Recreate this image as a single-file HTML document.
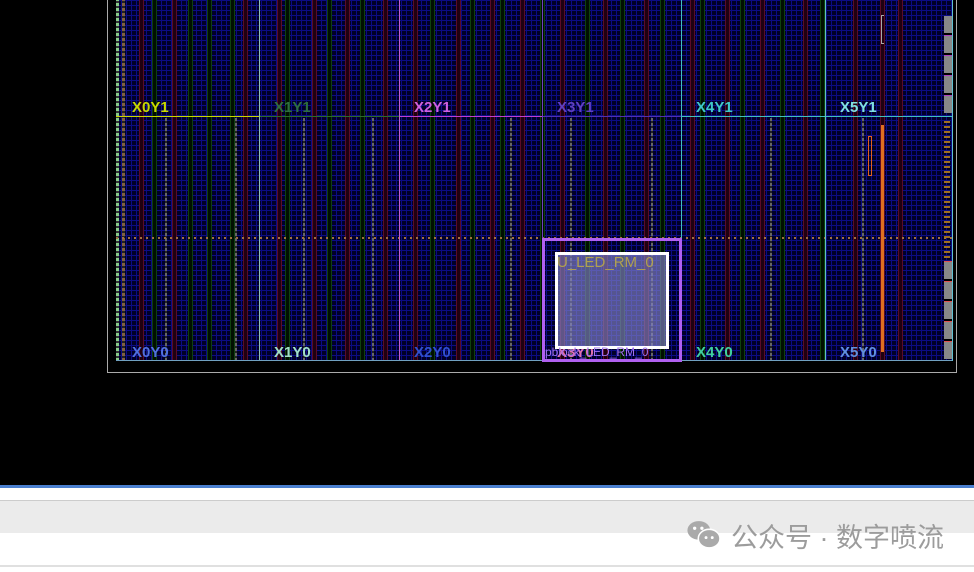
<!DOCTYPE html>
<html><head><meta charset="utf-8"><style>
body{margin:0;width:974px;height:572px;overflow:hidden;background:#000;position:relative;font-family:"Liberation Sans","Noto Sans CJK SC",sans-serif}
.a{position:absolute}
#grid{left:116px;top:0;width:836px;height:361px;background-color:#000028;
background-image:repeating-linear-gradient(90deg,#0c0c84 0 1px,transparent 1px 5px),repeating-linear-gradient(0deg,#0c0c84 0 1px,transparent 1px 5px)}
.r{position:absolute;top:0;height:361px;width:3px;border-left:1px solid #5a0c28;border-right:1px solid #5a0c28;background:#200010}
.g{position:absolute;top:0;height:361px;width:3px;border-left:1px solid #0f400f;border-right:1px solid #0f400f;background:#001000}
.y{position:absolute;top:118px;height:243px;width:2px;background:repeating-linear-gradient(0deg,#666 0 3px,#222 3px 5px)}
.l{position:absolute;font-size:15px;font-weight:bold}
</style></head><body>
<div class="a" style="left:107px;top:0;width:850px;height:373px;border-right:1px solid #aaa;border-bottom:1px solid #aaa;border-left:1px solid #aaa;box-sizing:border-box"></div>
<div class="a" id="grid"></div>
<div id="s"></div>
<script>
var s='';
[139,172,243,277,312,345,383,413,456,490,520,560,603,644,690,725,760,803,853,880,898].forEach(function(x){s+='<div class="r" style="left:'+x+'px"></div>'});
[152,188,207,230,285,327,360,430,470,500,540,585,620,660,700,740,780,820].forEach(function(x){s+='<div class="g" style="left:'+x+'px"></div>'});
[165,235,303,372,510,570,651,770,862].forEach(function(x){s+='<div class="y" style="left:'+x+'px"></div>'});
document.getElementById('s').innerHTML=s;
</script>
<div class="a" style="left:116px;top:0;width:3px;height:361px;background:repeating-linear-gradient(0deg,#8c8 0 3px,#333 3px 5px)"></div>
<div class="a" style="left:122px;top:0;width:3px;height:361px;background:repeating-linear-gradient(0deg,#806040 0 3px,#222 3px 5px)"></div>
<div class="a" style="left:116px;top:237px;width:836px;height:2px;background:repeating-linear-gradient(90deg,#a07040 0 2px,transparent 2px 6px)"></div>
<div class="a" style="left:116px;top:116px;width:143px;height:1px;background:#c8d800"></div>
<div class="a" style="left:259px;top:116px;width:140px;height:1px;background:#2a6a2a"></div>
<div class="a" style="left:399px;top:116px;width:143px;height:1px;background:#c040d0"></div>
<div class="a" style="left:542px;top:116px;width:139px;height:1px;background:#5030b0"></div>
<div class="a" style="left:681px;top:116px;width:271px;height:1px;background:#40c0c0"></div>
<div class="a" style="left:259px;top:0;width:1px;height:361px;background:#90c0b0"></div>
<div class="a" style="left:399px;top:0;width:1px;height:361px;background:#c060d0"></div>
<div class="a" style="left:542px;top:0;width:1px;height:361px;background:#7040c0"></div>
<div class="a" style="left:681px;top:0;width:1px;height:361px;background:#40c0c0"></div>
<div class="a" style="left:825px;top:0;width:1px;height:361px;background:#60c0c0"></div>
<div class="a" style="left:116px;top:360px;width:836px;height:1px;background:#70a0c0"></div>
<div class="a" style="left:952px;top:0;width:1px;height:361px;background:#60c0d0"></div>
<div class="a" style="left:944px;top:16px;width:8px;height:97px;background:repeating-linear-gradient(0deg,#888 0 17px,#b040c0 17px 18px,#000 18px 20px)"></div>
<div class="a" style="left:944px;top:261px;width:8px;height:98px;background:repeating-linear-gradient(0deg,#888 0 17px,#e05050 17px 18px,#000 18px 20px)"></div>
<div class="a" style="left:944px;top:118px;width:6px;height:140px;background:repeating-linear-gradient(0deg,#a07020 0 2px,transparent 2px 5px)"></div>
<div class="a" style="left:881px;top:125px;width:3px;height:227px;background:#e07020"></div>
<div class="a" style="left:868px;top:136px;width:4px;height:40px;border:1px solid #e06020;box-sizing:border-box"></div>
<div class="a" style="left:881px;top:15px;width:3px;height:29px;border:1px solid #aaa;border-right:none;box-sizing:border-box"></div>
<div class="l" style="left:132px;top:99px;color:#c8d800">X0Y1</div>
<div class="l" style="left:274px;top:99px;color:#2e6e3e">X1Y1</div>
<div class="l" style="left:414px;top:99px;color:#d060e0">X2Y1</div>
<div class="l" style="left:557px;top:99px;color:#6040c0">X3Y1</div>
<div class="l" style="left:696px;top:99px;color:#40c8c8">X4Y1</div>
<div class="l" style="left:840px;top:99px;color:#80e0e0">X5Y1</div>
<div class="l" style="left:132px;top:344px;color:#5070e0">X0Y0</div>
<div class="l" style="left:274px;top:344px;color:#a0e0c8">X1Y0</div>
<div class="l" style="left:414px;top:344px;color:#3050d0">X2Y0</div>
<div class="l" style="left:557px;top:344px;color:#e070b0">X3Y0</div>
<div class="l" style="left:696px;top:344px;color:#40d0a0">X4Y0</div>
<div class="l" style="left:840px;top:344px;color:#6090e0">X5Y0</div>
<div class="a" style="left:542px;top:238px;width:140px;height:124px;border:3px solid #b060f0;box-sizing:border-box"></div>
<div class="a" style="left:555px;top:252px;width:114px;height:97px;border:3px solid #fff;box-sizing:border-box;background:rgba(130,130,200,.65)"></div>
<div class="l" style="left:557px;top:254px;color:#b0a050;font-weight:normal">U_LED_RM_0</div>
<div class="l" style="left:545px;top:345px;color:#a070f0;font-size:12px;font-weight:normal">pblock_LED_RM_0</div>
<div class="a" style="left:0;top:485px;width:974px;height:3px;background:#4a7fcf"></div>
<div class="a" style="left:0;top:488px;width:974px;height:84px;background:#fff"></div>
<div class="a" style="left:0;top:500px;width:974px;height:1px;background:#ccc"></div>
<div class="a" style="left:0;top:501px;width:974px;height:32px;background:#ebebeb"></div>
<div class="a" style="left:0;top:565px;width:974px;height:2px;background:#e0e0e0"></div>
<svg class="a" style="left:686px;top:519px" width="38" height="31" viewBox="0 0 36 30"><ellipse cx="12" cy="11" rx="11" ry="9" fill="#aaa"/><ellipse cx="22" cy="19" rx="10.5" ry="9" fill="#aaa" stroke="#fff" stroke-width="1.5"/><circle cx="8" cy="9" r="1.6" fill="#fff"/><circle cx="15" cy="9" r="1.6" fill="#fff"/><circle cx="19" cy="18" r="1.4" fill="#fff"/><circle cx="25" cy="18" r="1.4" fill="#fff"/></svg>
<div class="a" style="left:731px;top:516px;font-size:27px;color:#9c9c9c;white-space:nowrap">公众号 · 数字喷流</div>
</body></html>
